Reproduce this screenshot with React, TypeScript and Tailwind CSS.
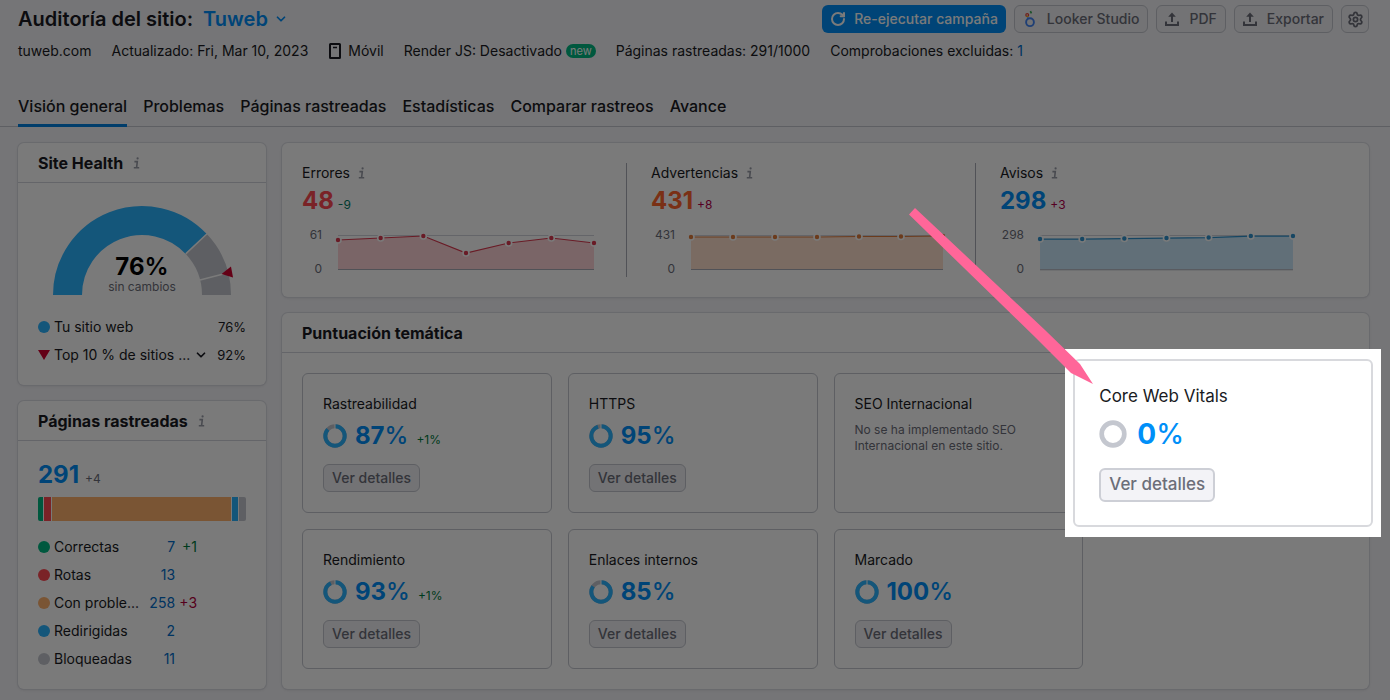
import React from 'react';
import { ChevronDown, RotateCw, Settings } from 'lucide-react';
import clsx from 'clsx';

const tabs = [
  'Visión general',
  'Problemas',
  'Páginas rastreadas',
  'Estadísticas',
  'Comparar rastreos',
  'Avance',
];

const stats = [
  {
    title: 'Errores',
    value: '48',
    delta: '-9',
    max: '61',
    valueClass: 'text-[#ff4953]',
    deltaClass: 'text-[#007c65]',
    labelClass: 'w-5',
    line: '#dc3a50',
    fill: '#ffd3d7',
    width: 256,
    points: [13, 11, 9, 26, 16, 11, 16],
  },
  {
    title: 'Advertencias',
    value: '431',
    delta: '+8',
    max: '431',
    valueClass: 'text-[#ff642d]',
    deltaClass: 'text-[#b5004a]',
    labelClass: 'w-6',
    line: '#e07b3c',
    fill: '#ffe0ce',
    width: 252,
    points: [10, 10, 10, 10, 9.5, 9.5, 9],
  },
  {
    title: 'Avisos',
    value: '298',
    delta: '+3',
    max: '298',
    valueClass: 'text-[#008ff8]',
    deltaClass: 'text-[#b5004a]',
    labelClass: 'w-6',
    line: '#2f93cf',
    fill: '#cbe9fa',
    width: 252,
    points: [12, 12, 11.5, 11, 10.5, 9, 9],
  },
];

const pages = [
  { label: 'Correctas', count: 7, delta: '+1', dot: 'bg-[#00b983]', deltaClass: 'text-[#007c3e]' },
  { label: 'Rotas', count: 13, dot: 'bg-[#ff4953]' },
  { label: 'Con proble...', count: 258, delta: '+3', dot: 'bg-[#ffb26e]', deltaClass: 'text-[#b5003c]' },
  { label: 'Redirigidas', count: 2, dot: 'bg-[#2bb3ff]' },
  { label: 'Bloqueadas', count: 11, dot: 'bg-[#c4c7cf]' },
];

const topics = [
  { title: 'Rastreabilidad', score: 87, delta: '+1%' },
  { title: 'HTTPS', score: 95 },
  { title: 'SEO Internacional', note: 'No se ha implementado SEO Internacional en este sitio.' },
  { title: 'Core Web Vitals', score: 0, highlighted: true },
  { title: 'Rendimiento', score: 93, delta: '+1%' },
  { title: 'Enlaces internos', score: 85 },
  { title: 'Marcado', score: 100 },
];

const InfoIcon = () => (
  <svg width="8" height="12" viewBox="0 0 8 12" fill="none" stroke="#9a9da8" strokeWidth="1.6" aria-hidden="true">
    <path d="M1.4 4.6h2.9L3.6 10.6M0.8 10.8h5.4" />
    <circle cx="4.6" cy="1.4" r="1.1" fill="#9a9da8" stroke="none" />
  </svg>
);

const ExportIcon = () => (
  <svg width="14" height="14" viewBox="0 0 14 14" fill="none" stroke="currentColor" strokeWidth="2" aria-hidden="true">
    <path d="M7 10V3M1 9.5V13h12V9.5" />
    <path d="M7 0.5 10.8 4.8H3.2z" fill="currentColor" stroke="none" />
  </svg>
);

const LookerIcon = () => (
  <svg width="14" height="18" viewBox="0 0 14 18" fill="none" aria-hidden="true">
    <circle cx="7" cy="12.2" r="3.9" stroke="#4285f4" strokeWidth="1.9" />
    <path d="M5 8.8 4.4 7.4" stroke="#4285f4" strokeWidth="1.4" />
    <circle cx="4.2" cy="5" r="1.4" stroke="#ea4335" strokeWidth="1.2" />
    <path d="M3.4 6.4 5.2 6.5" stroke="#fbbc04" strokeWidth="1.2" />
    <path d="M7.4 1.2 8.4 3.4" stroke="#34a853" strokeWidth="1.6" />
  </svg>
);

const GhostButton = ({ className, children, ...props }: React.ComponentProps<'button'>) => (
  <button
    className={clsx(
      'flex h-7 items-center gap-2.5 rounded-md border border-[#c4c7cf] bg-[#f0f0f4] text-sm font-medium text-[#6c6e79]',
      className
    )}
    {...props}
  >
    {children}
  </button>
);

const Card = ({ title, info, children }: { title?: string; info?: boolean; children: React.ReactNode }) => (
  <section className="rounded-md bg-white shadow-sm ring-1 ring-[#dcdde4]">
    {title && (
      <div className="flex h-10 items-center gap-2.5 border-b border-[#d1d4db] px-5">
        <h2 className="text-base font-bold">{title}</h2>
        {info && <InfoIcon />}
      </div>
    )}
    {children}
  </section>
);

const Header = () => (
  <header>
    <div className="pr-[21px] pl-[18px] pt-[5px]">
      <div className="flex h-7 items-center justify-between">
        <h1 className="flex items-center text-xl font-semibold">
          Auditoría del sitio:
          <button className="ml-2.5 flex items-center gap-1.5 text-[#008ff8]">
            Tuweb
            <ChevronDown size={14} strokeWidth={3} />
          </button>
        </h1>
        <div className="flex items-center gap-2">
          <button className="flex h-7 items-center gap-2 rounded-md bg-[#008ff8] px-2 text-sm font-medium text-white">
            <RotateCw size={16} strokeWidth={3} />
            Re-ejecutar campaña
          </button>
          <GhostButton className="px-2">
            <LookerIcon />
            Looker Studio
          </GhostButton>
          <GhostButton className="px-2">
            <ExportIcon />
            PDF
          </GhostButton>
          <GhostButton className="px-2">
            <ExportIcon />
            Exportar
          </GhostButton>
          <GhostButton className="w-7 justify-center" aria-label="Configuración">
            <Settings size={17} strokeWidth={2.5} className="shrink-0" />
          </GhostButton>
        </div>
      </div>

      <div className="mt-2 flex items-center gap-5 text-sm">
        <span>tuweb.com</span>
        <span>Actualizado: Fri, Mar 10, 2023</span>
        <span className="flex items-center gap-1.5">
          <svg width="14" height="16" viewBox="0 0 14 16" fill="none" stroke="currentColor" aria-hidden="true">
            <rect x="2" y="1" width="10" height="14" rx="0.5" strokeWidth="2" />
            <path d="M5 4.5h4" strokeWidth="1.5" />
          </svg>
          Móvil
        </span>
        <span className="flex items-center gap-1">
          Render JS: Desactivado
          <span className="rounded-full bg-[#00b983] px-1 text-[11px] leading-[14px] text-white">new</span>
        </span>
        <span>Páginas rastreadas: 291/1000</span>
        <span>
          Comprobaciones excluidas: <a href="#" className="text-[#006dca]">1</a>
        </span>
      </div>
    </div>

    <nav className="mt-6 flex gap-4 border-b border-[#c4c7cf] pl-[18px]">
      {tabs.map((tab, i) => (
        <a
          key={tab}
          href="#"
          className={clsx(
            '-mb-px h-[42px] border-b-3 pt-[9px] text-base font-medium',
            i === 0 ? 'border-[#0080e0]' : 'border-transparent'
          )}
        >
          {tab}
        </a>
      ))}
    </nav>
  </header>
);

const SiteHealth = () => (
  <Card title="Site Health" info>
    <div className="px-5 pt-5 pb-4">
      <div className="relative mx-auto w-[184px]">
        <svg viewBox="0 0 184 94" className="block w-full overflow-visible" fill="none">
          <path d="M17.5 92A74.5 74.5 0 0 1 146.3 41" stroke="#2bb3ff" strokeWidth="29" />
          <path d="M146.3 41A74.5 74.5 0 0 1 166.5 92" stroke="#c4c7cf" strokeWidth="29" />
          <path d="M135.7 50.9 157.6 30.3M150 77.1 179.2 69.6" stroke="#fff" strokeWidth="1.5" />
          <path d="M171.5 71 181 63.5 183 74.5z" fill="#d1002f" />
        </svg>
        <div className="absolute inset-x-0 bottom-0.5 text-center">
          <div className="text-2xl leading-6 font-bold text-black">
            76<span className="font-semibold">%</span>
          </div>
          <div className="text-xs text-[#6c6e79]">sin cambios</div>
        </div>
      </div>
      <div className="mt-4 text-sm">
        <div className="flex h-7 items-center gap-1">
          <span className="size-3 rounded-full bg-[#2bb3ff]" />
          Tu sitio web
          <span className="ml-auto text-[13px]">76%</span>
        </div>
        <div className="flex h-7 items-center gap-1">
          <svg width="12" height="10" viewBox="0 0 12 10" aria-hidden="true">
            <path d="M0 0h12L6 10z" fill="#d1002f" />
          </svg>
          <button className="flex items-center gap-1">
            Top 10 % de sitios ...
            <ChevronDown size={14} strokeWidth={3} />
          </button>
          <span className="ml-auto text-[13px]">92%</span>
        </div>
      </div>
    </div>
  </Card>
);

const CrawledPages = () => (
  <Card title="Páginas rastreadas" info>
    <div className="px-5 pt-4.5 pb-4">
      <div className="flex items-baseline gap-1.5">
        <a href="#" className="text-2xl font-bold text-[#008ff8]">291</a>
        <span className="text-xs text-[#6c6e79]">+4</span>
      </div>
      <div className="mt-1.5 flex h-6 gap-px overflow-hidden rounded-xs">
        <div className="w-[5px] bg-[#00b983]" />
        <div className="w-[7px] bg-[#ff4953]" />
        <div className="flex-1 bg-[#ffb26e]" />
        <div className="w-1.5 bg-[#2bb3ff]" />
        <div className="w-[7px] bg-[#c4c7cf]" />
      </div>
      <table className="mt-3 text-sm">
        <tbody>
          {pages.map((page) => (
            <tr key={page.label} className="h-7">
              <th scope="row" className="w-[100px] p-0 text-left font-normal">
                <span className="flex items-center gap-1 whitespace-nowrap">
                  <span className={clsx('size-3 rounded-full', page.dot)} />
                  {page.label}
                </span>
              </th>
              <td className="w-9 p-0 text-right">
                <a href="#" className="text-[#006dca]">{page.count}</a>
              </td>
              <td className={clsx('w-[22px] p-0 text-right', page.deltaClass)}>{page.delta}</td>
            </tr>
          ))}
        </tbody>
      </table>
    </div>
  </Card>
);

const AreaChart = ({ points, width, line, fill }: { points: number[]; width: number; line: string; fill: string }) => {
  const step = width / (points.length - 1);
  const path = points.map((y, i) => `${i * step},${y}`).join(' ');

  return (
    <svg viewBox={`0 0 ${width} 50`} className="ml-4 min-w-0 flex-1 overflow-visible">
      <path d={`M0 8.5H${width}`} stroke="#d1d4db" />
      <polygon points={`0,42 ${path} ${width},42`} fill={fill} />
      <path d={`M0 42.5H${width}`} stroke="#a9abb6" />
      <polyline points={path} fill="none" stroke={line} strokeWidth="1.2" />
      {points.map((y, i) => (
        <circle key={i} cx={i * step} cy={y} r="3" fill={line} stroke="#fff" strokeWidth="1.6" />
      ))}
    </svg>
  );
};

const Stats = () => (
  <Card>
    <div className="grid grid-cols-3 p-5">
      {stats.map((stat, i) => (
        <div key={stat.title} className={clsx('mr-6 pr-8', i < 2 && 'border-r border-[#a9abb6]')}>
          <div className="flex items-center gap-2 text-sm">
            {stat.title}
            <InfoIcon />
          </div>
          <div className="mt-0.5 flex items-baseline gap-1">
            <a href="#" className={clsx('text-2xl font-bold', stat.valueClass)}>{stat.value}</a>
            <span className={clsx('text-xs', stat.deltaClass)}>{stat.delta}</span>
          </div>
          <div className="mt-2.5 flex">
            <div
              className={clsx(
                'flex h-[50px] flex-col items-end justify-between text-xs text-[#6c6e79]',
                stat.labelClass
              )}
            >
              <span>{stat.max}</span>
              <span>0</span>
            </div>
            <AreaChart points={stat.points} width={stat.width} line={stat.line} fill={stat.fill} />
          </div>
        </div>
      ))}
    </div>
  </Card>
);

const ScoreRing = ({ score, className }: { score: number; className?: string }) => (
  <svg viewBox="0 0 24 24" fill="none" strokeWidth="4" className={className} aria-hidden="true">
    <circle cx="12" cy="12" r="9.7" stroke="#c4c7cf" />
    {score > 0 && (
      <>
        <circle
          cx="12"
          cy="12"
          r="9.7"
          stroke="#2bb3ff"
          pathLength="100"
          strokeDasharray={`${score} 100`}
          transform="rotate(-90 12 12)"
        />
        <path d="M12 0v5" stroke="#fff" strokeWidth="1" />
      </>
    )}
  </svg>
);

const TopicCard = ({ title, score, delta, note }: { title: string; score?: number; delta?: string; note?: string }) => (
  <article className="rounded-md border border-[#c4c7cf] p-5">
    <h3 className="text-sm">{title}</h3>
    {note && <p className="mt-2 text-xs text-[#6c6e79]">{note}</p>}
    {score !== undefined && (
      <>
        <div className="mt-1.5 flex items-baseline gap-2">
          <ScoreRing score={score} className="size-6 self-center" />
          <a href="#" className="text-2xl font-bold text-[#008ff8]">
            {score}
            <span className="font-medium">%</span>
          </a>
          {delta && <span className="text-xs text-[#007c3e]">{delta}</span>}
        </div>
        <GhostButton className="mt-3 px-2">Ver detalles</GhostButton>
      </>
    )}
  </article>
);

// Enlarged copy of a topic card, lifted above the dimmed page
const SpotlightCard = ({ title, score }: { title: string; score: number }) => (
  <div className="relative">
    <div className="absolute -inset-y-6 -right-8 -left-[34px] z-20 flex bg-white px-2 py-2.5">
      <article className="flex-1 rounded-md border-2 border-[#d8d9dd] px-6 pt-[23px]">
        <h3 className="text-[17px] leading-6">{title}</h3>
        <div className="mt-2 flex items-center gap-2.5">
          <ScoreRing score={score} className="size-7" />
          <a href="#" className="text-[28px] leading-9 font-bold text-[#008ff8]">
            {score}
            <span className="font-medium">%</span>
          </a>
        </div>
        <button className="mt-4 h-[34px] rounded-md border-2 border-[#cdcfd6] bg-[#f3f3f7] px-2 text-[17px] font-medium text-[#6c6e79]">
          Ver detalles
        </button>
      </article>
      <svg
        width="188"
        height="178"
        viewBox="0 0 188 178"
        className="absolute -top-[142px] -left-[158px]"
        aria-hidden="true"
      >
        <path d="M2 7.5 8 1 138 123 173 157 186 177 164 166 129 131z" fill="#ff6699" />
      </svg>
    </div>
  </div>
);

const App = () => {
  return (
    <div className="relative min-h-screen bg-[#f4f4f8] pb-3 font-['Inter','Liberation_Sans',sans-serif] text-[#191b23]">
      <Header />
      <main className="flex gap-4 pt-4 pr-[21px] pl-[18px]">
        <div className="flex w-62 shrink-0 flex-col gap-4">
          <SiteHealth />
          <CrawledPages />
        </div>
        <div className="flex min-w-0 flex-1 flex-col gap-4">
          <Stats />
          <Card title="Puntuación temática">
            <div className="grid grid-cols-4 gap-4 p-5">
              {topics.map(({ highlighted, ...topic }) =>
                highlighted ? (
                  <SpotlightCard key={topic.title} title={topic.title} score={topic.score ?? 0} />
                ) : (
                  <TopicCard key={topic.title} {...topic} />
                )
              )}
            </div>
          </Card>
        </div>
      </main>

      {/* Dimming layer */}
      <div className="pointer-events-none absolute inset-0 z-10 bg-black/52" />
    </div>
  );
};

export default App;
